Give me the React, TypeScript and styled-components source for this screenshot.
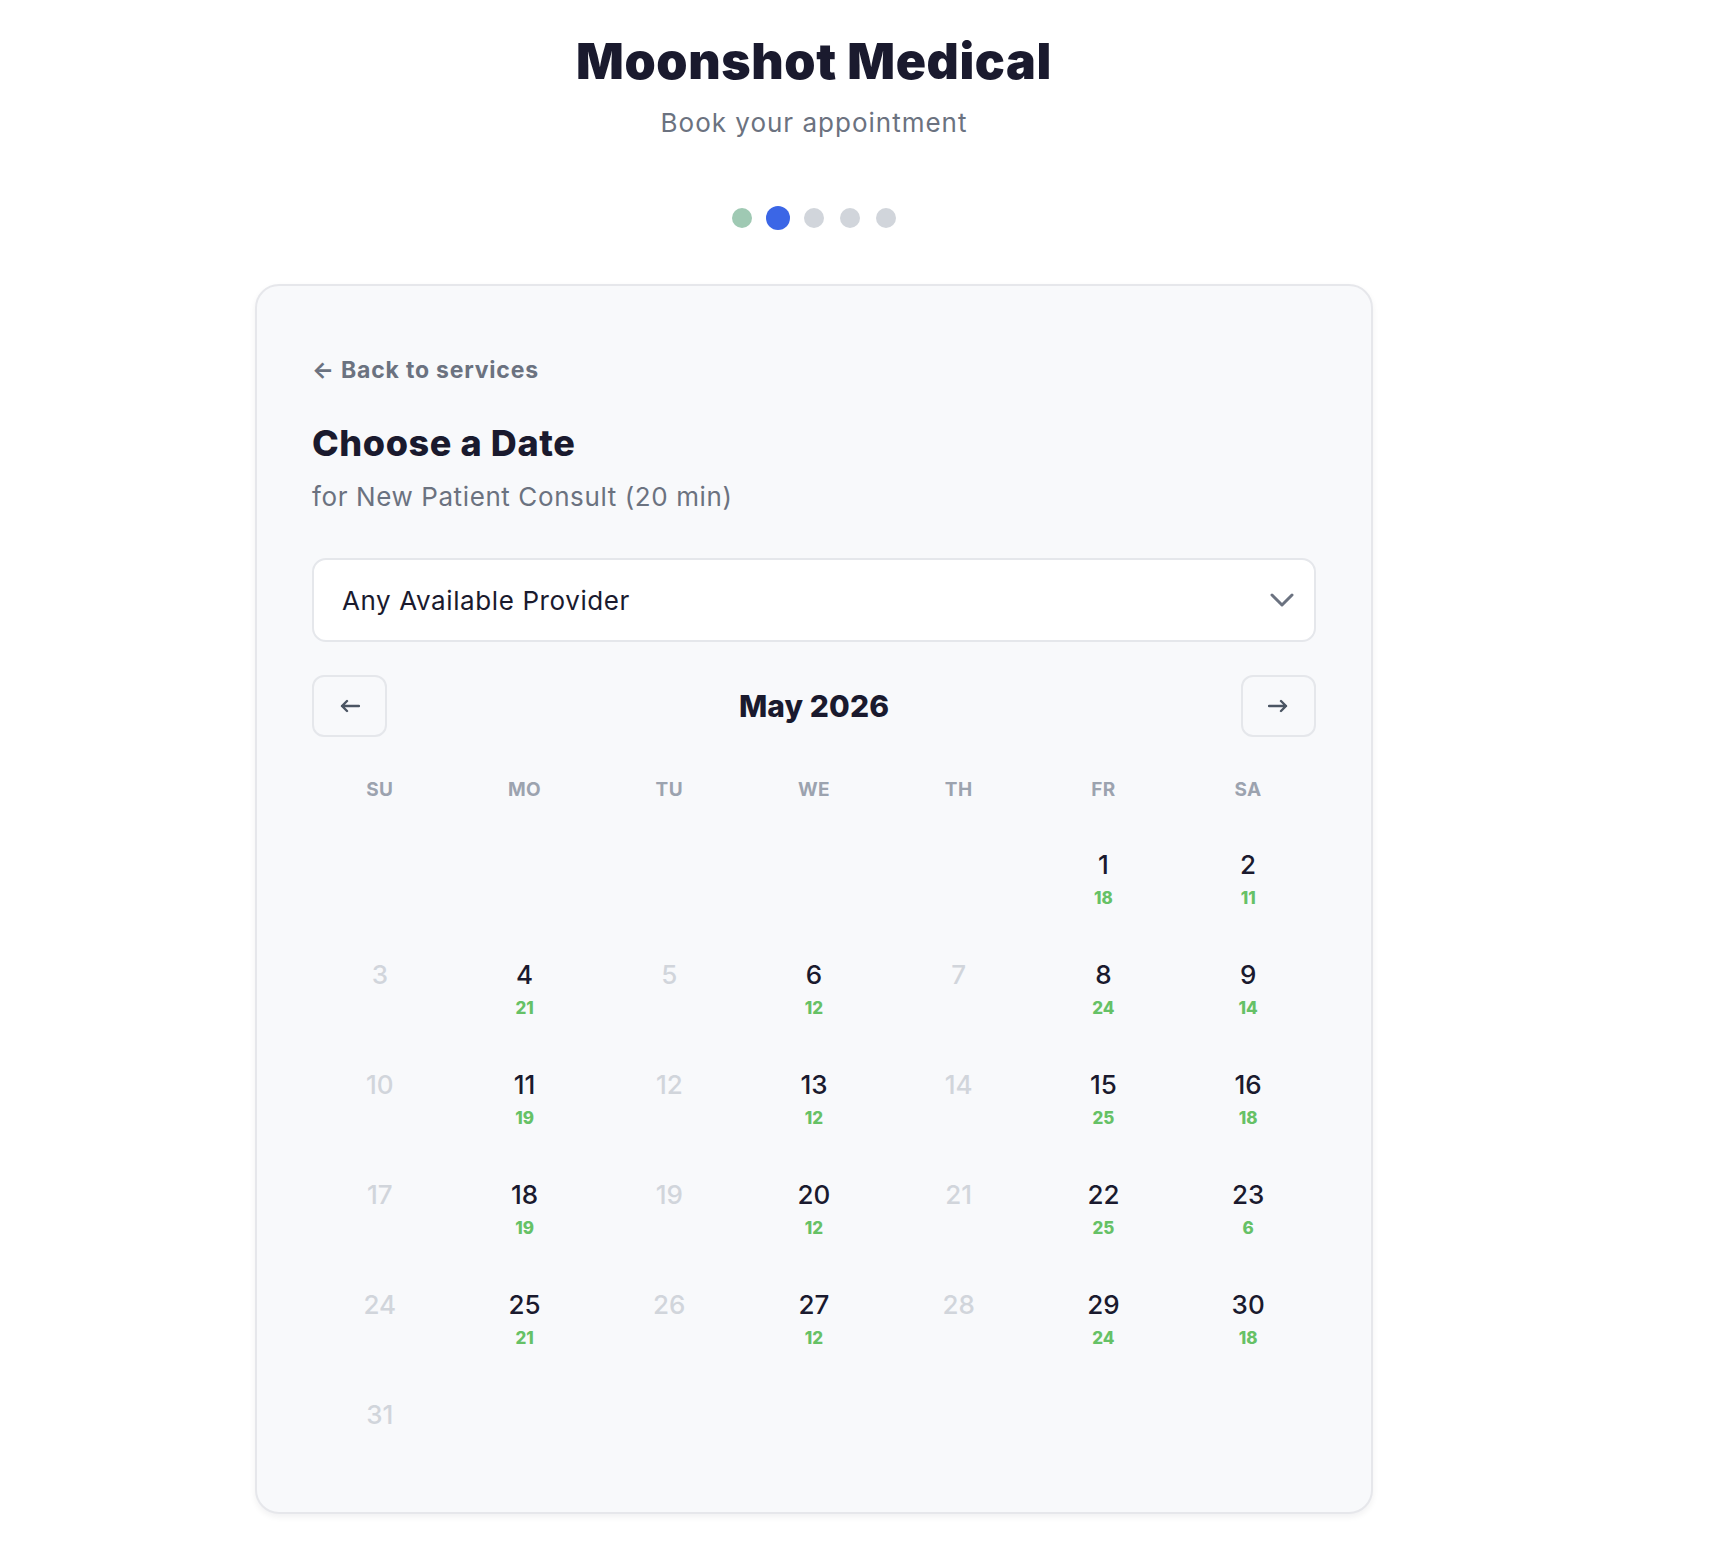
import React from 'react'
import styled, { createGlobalStyle } from 'styled-components'

const GlobalStyle = createGlobalStyle`
  html, body {
    margin: 0;
    padding: 0;
    background: #ffffff;
  }
  body {
    font-family: Inter, "Noto Sans", "Liberation Sans", sans-serif;
    color: #1a1a2e;
  }
  * { box-sizing: border-box; }
`

const Page = styled.div`
  display: flex;
  flex-direction: column;
  align-items: center;
  padding: 31px 102px 40px 0;
`

const Title = styled.h1`
  margin: 0;
  font-size: 50px;
  line-height: 1.2;
  font-weight: 900;
  letter-spacing: 0.6px;
  color: #1a1a2e;
`

const Subtitle = styled.p`
  margin: 15px 0 0;
  font-size: 26px;
  line-height: 1.3;
  font-weight: 400;
  letter-spacing: 1px;
  color: #6b7280;
`

const Steps = styled.div`
  display: flex;
  gap: 16px;
  margin-top: 68px;
`

const Dot = styled.span<{ $state: 'done' | 'active' | 'todo' }>`
  width: 20px;
  height: 20px;
  border-radius: 50%;
  background: ${p => (p.$state === 'done' ? '#9fc9b3' : p.$state === 'active' ? '#3b66e6' : '#d1d5db')};
  transform: ${p => (p.$state === 'active' ? 'scale(1.2)' : 'none')};
`

const Card = styled.section`
  width: 1118px;
  margin-top: 56px;
  padding: 70px 55px 29px;
  background: #f8f9fb;
  border: 2px solid #e6e7eb;
  border-radius: 24px;
  box-shadow: 0 3px 6px rgba(17, 24, 39, 0.06);
`

const BackLink = styled.a`
  display: block;
  font-size: 23px;
  line-height: 1.3;
  font-weight: 700;
  letter-spacing: 0.8px;
  color: #6b7280;
  text-decoration: none;
  cursor: pointer;
`

const Heading = styled.h2`
  margin: 35px 0 0;
  font-size: 36px;
  line-height: 1.25;
  font-weight: 800;
  letter-spacing: 0.6px;
  color: #1a1a2e;
`

const ServiceNote = styled.p`
  margin: 14px 0 0;
  font-size: 26px;
  line-height: 1.3;
  font-weight: 400;
  letter-spacing: 0.6px;
  color: #6b7280;
`

const Select = styled.div`
  display: flex;
  align-items: center;
  justify-content: space-between;
  height: 84px;
  margin-top: 45px;
  padding: 0 20px 0 28px;
  background: #ffffff;
  border: 2px solid #e5e7eb;
  border-radius: 14px;
  font-size: 26px;
  letter-spacing: 0.6px;
  color: #1a1a2e;
`

const NavRow = styled.div`
  display: flex;
  align-items: center;
  justify-content: space-between;
  margin-top: 33px;
`

const NavButton = styled.button`
  width: 75px;
  height: 62px;
  display: flex;
  align-items: center;
  justify-content: center;
  background: transparent;
  border: 2px solid #e5e7eb;
  border-radius: 12px;
  color: #4b5563;
  cursor: pointer;
`

const Month = styled.div`
  font-size: 30px;
  font-weight: 800;
  letter-spacing: 0.1px;
  color: #1a1a2e;
`

const WeekRow = styled.div`
  display: grid;
  grid-template-columns: repeat(7, 1fr);
  column-gap: 15px;
  margin-top: 41px;
  padding: 0 3px;
`

const WeekDay = styled.div`
  text-align: center;
  font-size: 19px;
  line-height: 24px;
  font-weight: 700;
  letter-spacing: 0.4px;
  color: #9ca3af;
`

const DaysGrid = styled.div`
  display: grid;
  grid-template-columns: repeat(7, 1fr);
  grid-auto-rows: 110px;
  column-gap: 15px;
  margin-top: 21px;
  padding: 0 3px;
`

const DayCell = styled.div<{ $available: boolean }>`
  display: flex;
  flex-direction: column;
  align-items: center;
  justify-content: flex-start;
  padding-top: 26px;
  cursor: ${p => (p.$available ? 'pointer' : 'default')};
`

const DayNumber = styled.span<{ $available: boolean }>`
  font-size: 26px;
  line-height: 32px;
  font-weight: 500;
  color: ${p => (p.$available ? '#1a1a2e' : '#d1d5db')};
`

const SlotCount = styled.span`
  margin-top: 7px;
  font-size: 17px;
  line-height: 20px;
  font-weight: 800;
  color: #66c166;
`

const Arrow = ({ dir }: { dir: 'left' | 'right' }) => (
  <svg width="20" height="14" viewBox="0 0 20 14" fill="none">
    {dir === 'left' ? (
      <path d="M19 7H2M7 2L2 7l5 5" stroke="currentColor" strokeWidth="2.4" strokeLinecap="round" strokeLinejoin="round" />
    ) : (
      <path d="M1 7h17M13 2l5 5-5 5" stroke="currentColor" strokeWidth="2.4" strokeLinecap="round" strokeLinejoin="round" />
    )}
  </svg>
)

const Chevron = () => (
  <svg width="24" height="14" viewBox="0 0 24 14" fill="none">
    <path d="M2 2l10 10L22 2" stroke="#6b7280" strokeWidth="3" strokeLinecap="round" strokeLinejoin="round" />
  </svg>
)

const slots: Record<number, number> = {
  1: 18, 2: 11, 4: 21, 6: 12, 8: 24, 9: 14, 11: 19, 13: 12, 15: 25,
  16: 18, 18: 19, 20: 12, 22: 25, 23: 6, 25: 21, 27: 12, 29: 24, 30: 18,
}

const weekDays = ['SU', 'MO', 'TU', 'WE', 'TH', 'FR', 'SA']
const firstWeekday = 5 // May 1, 2026 is a Friday
const daysInMonth = 31

export default function App() {
  const cells: (number | null)[] = [
    ...Array.from({ length: firstWeekday }, () => null),
    ...Array.from({ length: daysInMonth }, (_, i) => i + 1),
  ]

  return (
    <>
      <GlobalStyle />
      <Page>
        <Title>Moonshot Medical</Title>
        <Subtitle>Book your appointment</Subtitle>
        <Steps>
          <Dot $state="done" />
          <Dot $state="active" />
          <Dot $state="todo" />
          <Dot $state="todo" />
          <Dot $state="todo" />
        </Steps>

        <Card>
          <BackLink>← Back to services</BackLink>
          <Heading>Choose a Date</Heading>
          <ServiceNote>for New Patient Consult (20 min)</ServiceNote>

          <Select>
            <span>Any Available Provider</span>
            <Chevron />
          </Select>

          <NavRow>
            <NavButton aria-label="Previous month"><Arrow dir="left" /></NavButton>
            <Month>May 2026</Month>
            <NavButton aria-label="Next month"><Arrow dir="right" /></NavButton>
          </NavRow>

          <WeekRow>
            {weekDays.map(d => <WeekDay key={d}>{d}</WeekDay>)}
          </WeekRow>

          <DaysGrid>
            {cells.map((day, i) => {
              if (day === null) return <div key={`e${i}`} />
              const count = slots[day]
              const available = count !== undefined
              return (
                <DayCell key={day} $available={available}>
                  <DayNumber $available={available}>{day}</DayNumber>
                  {available && <SlotCount>{count}</SlotCount>}
                </DayCell>
              )
            })}
          </DaysGrid>
        </Card>
      </Page>
    </>
  )
}
